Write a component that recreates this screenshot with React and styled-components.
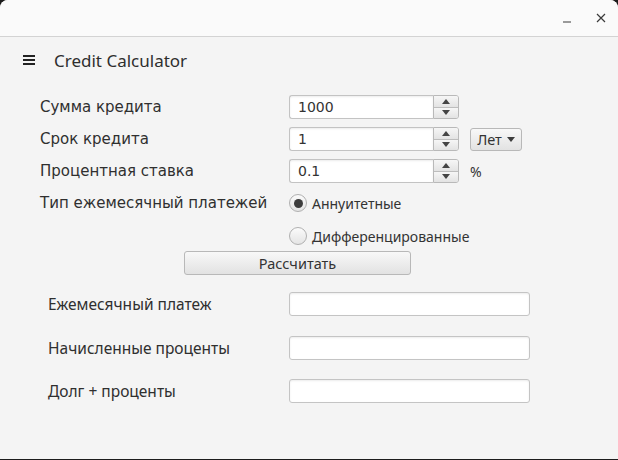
import React, { useState } from "react";
import styled, { createGlobalStyle } from "styled-components";

const GlobalStyle = createGlobalStyle`
  html, body {
    margin: 0;
    padding: 0;
    background: #1c1c1c;
  }
  body {
    width: 618px;
    height: 460px;
    overflow: hidden;
  }
`;

const Window = styled.div`
  width: 618px;
  height: 459px;
  background: #f4f4f4;
  border-radius: 8px 8px 0 0;
  overflow: hidden;
  display: flex;
  flex-direction: column;
`;

const TitleBar = styled.div`
  height: 36px;
  flex: none;
  background: #fafafa;
  border-bottom: 1px solid #d3d3d3;
  display: flex;
  justify-content: flex-end;
  align-items: center;
  gap: 10px;
  padding-right: 5px;
`;

const WinButton = styled.button`
  width: 24px;
  height: 24px;
  padding: 0;
  border: 0;
  background: transparent;
  display: flex;
  align-items: center;
  justify-content: center;
  color: #3a3a3a;
`;

const Header = styled.div`
  height: 46px;
  flex: none;
  display: flex;
  align-items: center;
  gap: 19px;
  padding-left: 23px;
  font-family: "Noto Sans", sans-serif;
  font-size: 17px;
  color: #2e2e2e;
`;

const Form = styled.div`
  display: flex;
  flex-direction: column;
  padding-top: 12px;
`;

const Row = styled.div`
  height: 24px;
  margin-top: ${(p) => p.$gap || 0}px;
  padding-left: ${(p) => p.$indent || 40}px;
  display: flex;
  align-items: center;
`;

const Label = styled.div`
  width: ${(p) => p.$width || 249}px;
  flex: none;
  font-family: ${(p) => (p.$soft ? '"Noto Sans"' : '"DejaVu Sans"')}, sans-serif;
  font-size: ${(p) => (p.$soft ? 15.5 : 15)}px;
  color: #2f2f2f;
  white-space: nowrap;
`;

const Spinner = styled.div`
  display: flex;
  width: 170px;
  height: 24px;
`;

const SpinField = styled.input`
  width: 144px;
  box-sizing: border-box;
  height: 24px;
  border: 1px solid #c3c3c3;
  border-right: 0;
  border-radius: 3px 0 0 3px;
  background: #fff;
  box-shadow: inset 0 1px 2px rgba(0, 0, 0, 0.08);
  padding: 0 8px;
  font-family: "DejaVu Sans", sans-serif;
  font-size: 14px;
  color: #333;
  outline: none;
`;

const SpinButtons = styled.div`
  width: 26px;
  display: flex;
  flex-direction: column;
  border: 1px solid #b9b9b9;
  border-radius: 0 3px 3px 0;
  overflow: hidden;
  box-sizing: border-box;
`;

const SpinButton = styled.div`
  flex: 1;
  display: flex;
  align-items: center;
  justify-content: center;
  background: linear-gradient(#f6f6f6, #e3e3e3);
  border-top: ${(p) => (p.$lower ? "1px solid #bdbdbd" : "0")};
`;

const Arrow = styled.div`
  width: 0;
  height: 0;
  border-left: 4.5px solid transparent;
  border-right: 4.5px solid transparent;
  ${(p) =>
    p.$up
      ? "border-bottom: 5px solid #444;"
      : "border-top: 5px solid #444;"}
`;

const Side = styled.div`
  margin-left: 11px;
  font-family: "Noto Sans", sans-serif;
  font-size: 14px;
  color: #333;
`;

const GrayButton = styled.button`
  width: ${(p) => p.$width}px;
  height: ${(p) => p.$height || 24}px;
  margin-left: ${(p) => p.$offset || 0}px;
  padding: 0;
  box-sizing: border-box;
  border: 1px solid #b8b8b8;
  border-radius: 3px;
  background: linear-gradient(#f8f8f8, #e2e2e2);
  font-family: "Noto Sans", sans-serif;
  font-size: 14.5px;
  color: #333;
  display: flex;
  align-items: center;
  justify-content: center;
  gap: 5px;
`;

const Caret = styled.span`
  width: 0;
  height: 0;
  border-left: 4.5px solid transparent;
  border-right: 4.5px solid transparent;
  border-top: 5px solid #3c3c3c;
`;

const RadioLabel = styled.label`
  display: flex;
  align-items: center;
  gap: 5px;
  font-family: "Noto Sans", sans-serif;
  font-size: 14px;
  color: #333;
  cursor: default;
`;

const RadioCircle = styled.span`
  width: 18px;
  height: 18px;
  box-sizing: border-box;
  border-radius: 50%;
  border: 1px solid #b0b0b0;
  background: linear-gradient(#fbfbfb, #e4e4e4);
  display: flex;
  align-items: center;
  justify-content: center;
  &::after {
    content: "";
    width: 9px;
    height: 9px;
    border-radius: 50%;
    background: #3d3d3d;
    display: ${(p) => (p.$checked ? "block" : "none")};
  }
`;

const OutField = styled.input`
  width: 241px;
  height: 24px;
  box-sizing: border-box;
  border: 1px solid #c4c4c4;
  border-radius: 3px;
  background: #fff;
  box-shadow: inset 0 1px 2px rgba(0, 0, 0, 0.08);
  outline: none;
`;

function NumberSpinner({ value }) {
  return (
    <Spinner>
      <SpinField defaultValue={value} />
      <SpinButtons>
        <SpinButton>
          <Arrow $up />
        </SpinButton>
        <SpinButton $lower>
          <Arrow />
        </SpinButton>
      </SpinButtons>
    </Spinner>
  );
}

export default function App() {
  const [type, setType] = useState("annuity");

  return (
    <>
      <GlobalStyle />
      <Window>
        <TitleBar>
          <WinButton>
            <svg width="10" height="10" viewBox="0 0 10 10">
              <path d="M1 9h8" stroke="currentColor" strokeWidth="1.2" />
            </svg>
          </WinButton>
          <WinButton>
            <svg width="10" height="10" viewBox="0 0 10 10">
              <path
                d="M1 1l8 8M9 1l-8 8"
                stroke="currentColor"
                strokeWidth="1.2"
              />
            </svg>
          </WinButton>
        </TitleBar>
        <Header>
          <svg width="12" height="10" viewBox="0 0 12 10">
            <path d="M0 1h12M0 5h12M0 9h12" stroke="#222" strokeWidth="2" />
          </svg>
          Credit Calculator
        </Header>
        <Form>
          <Row>
            <Label>Сумма кредита</Label>
            <NumberSpinner value="1000" />
          </Row>
          <Row $gap={8}>
            <Label>Срок кредита</Label>
            <NumberSpinner value="1" />
            <GrayButton $width={52} $height={23} $offset={11}>
              Лет <Caret />
            </GrayButton>
          </Row>
          <Row $gap={8}>
            <Label>Процентная ставка</Label>
            <NumberSpinner value="0.1" />
            <Side>%</Side>
          </Row>
          <Row $gap={8}>
            <Label>Тип ежемесячный платежей</Label>
            <RadioLabel onClick={() => setType("annuity")}>
              <RadioCircle $checked={type === "annuity"} />
              Аннуитетные
            </RadioLabel>
          </Row>
          <Row $gap={9}>
            <Label />
            <RadioLabel onClick={() => setType("diff")}>
              <RadioCircle $checked={type === "diff"} />
              Дифференцированные
            </RadioLabel>
          </Row>
          <Row $gap={3}>
            <GrayButton $width={227} $offset={144}>
              Рассчитать
            </GrayButton>
          </Row>
          <Row $gap={17} $indent={48}>
            <Label $width={241} $soft>
              Ежемесячный платеж
            </Label>
            <OutField />
          </Row>
          <Row $gap={20} $indent={48}>
            <Label $width={241} $soft>
              Начисленные проценты
            </Label>
            <OutField />
          </Row>
          <Row $gap={19} $indent={48}>
            <Label $width={241} $soft>
              Долг + проценты
            </Label>
            <OutField />
          </Row>
        </Form>
      </Window>
    </>
  );
}
